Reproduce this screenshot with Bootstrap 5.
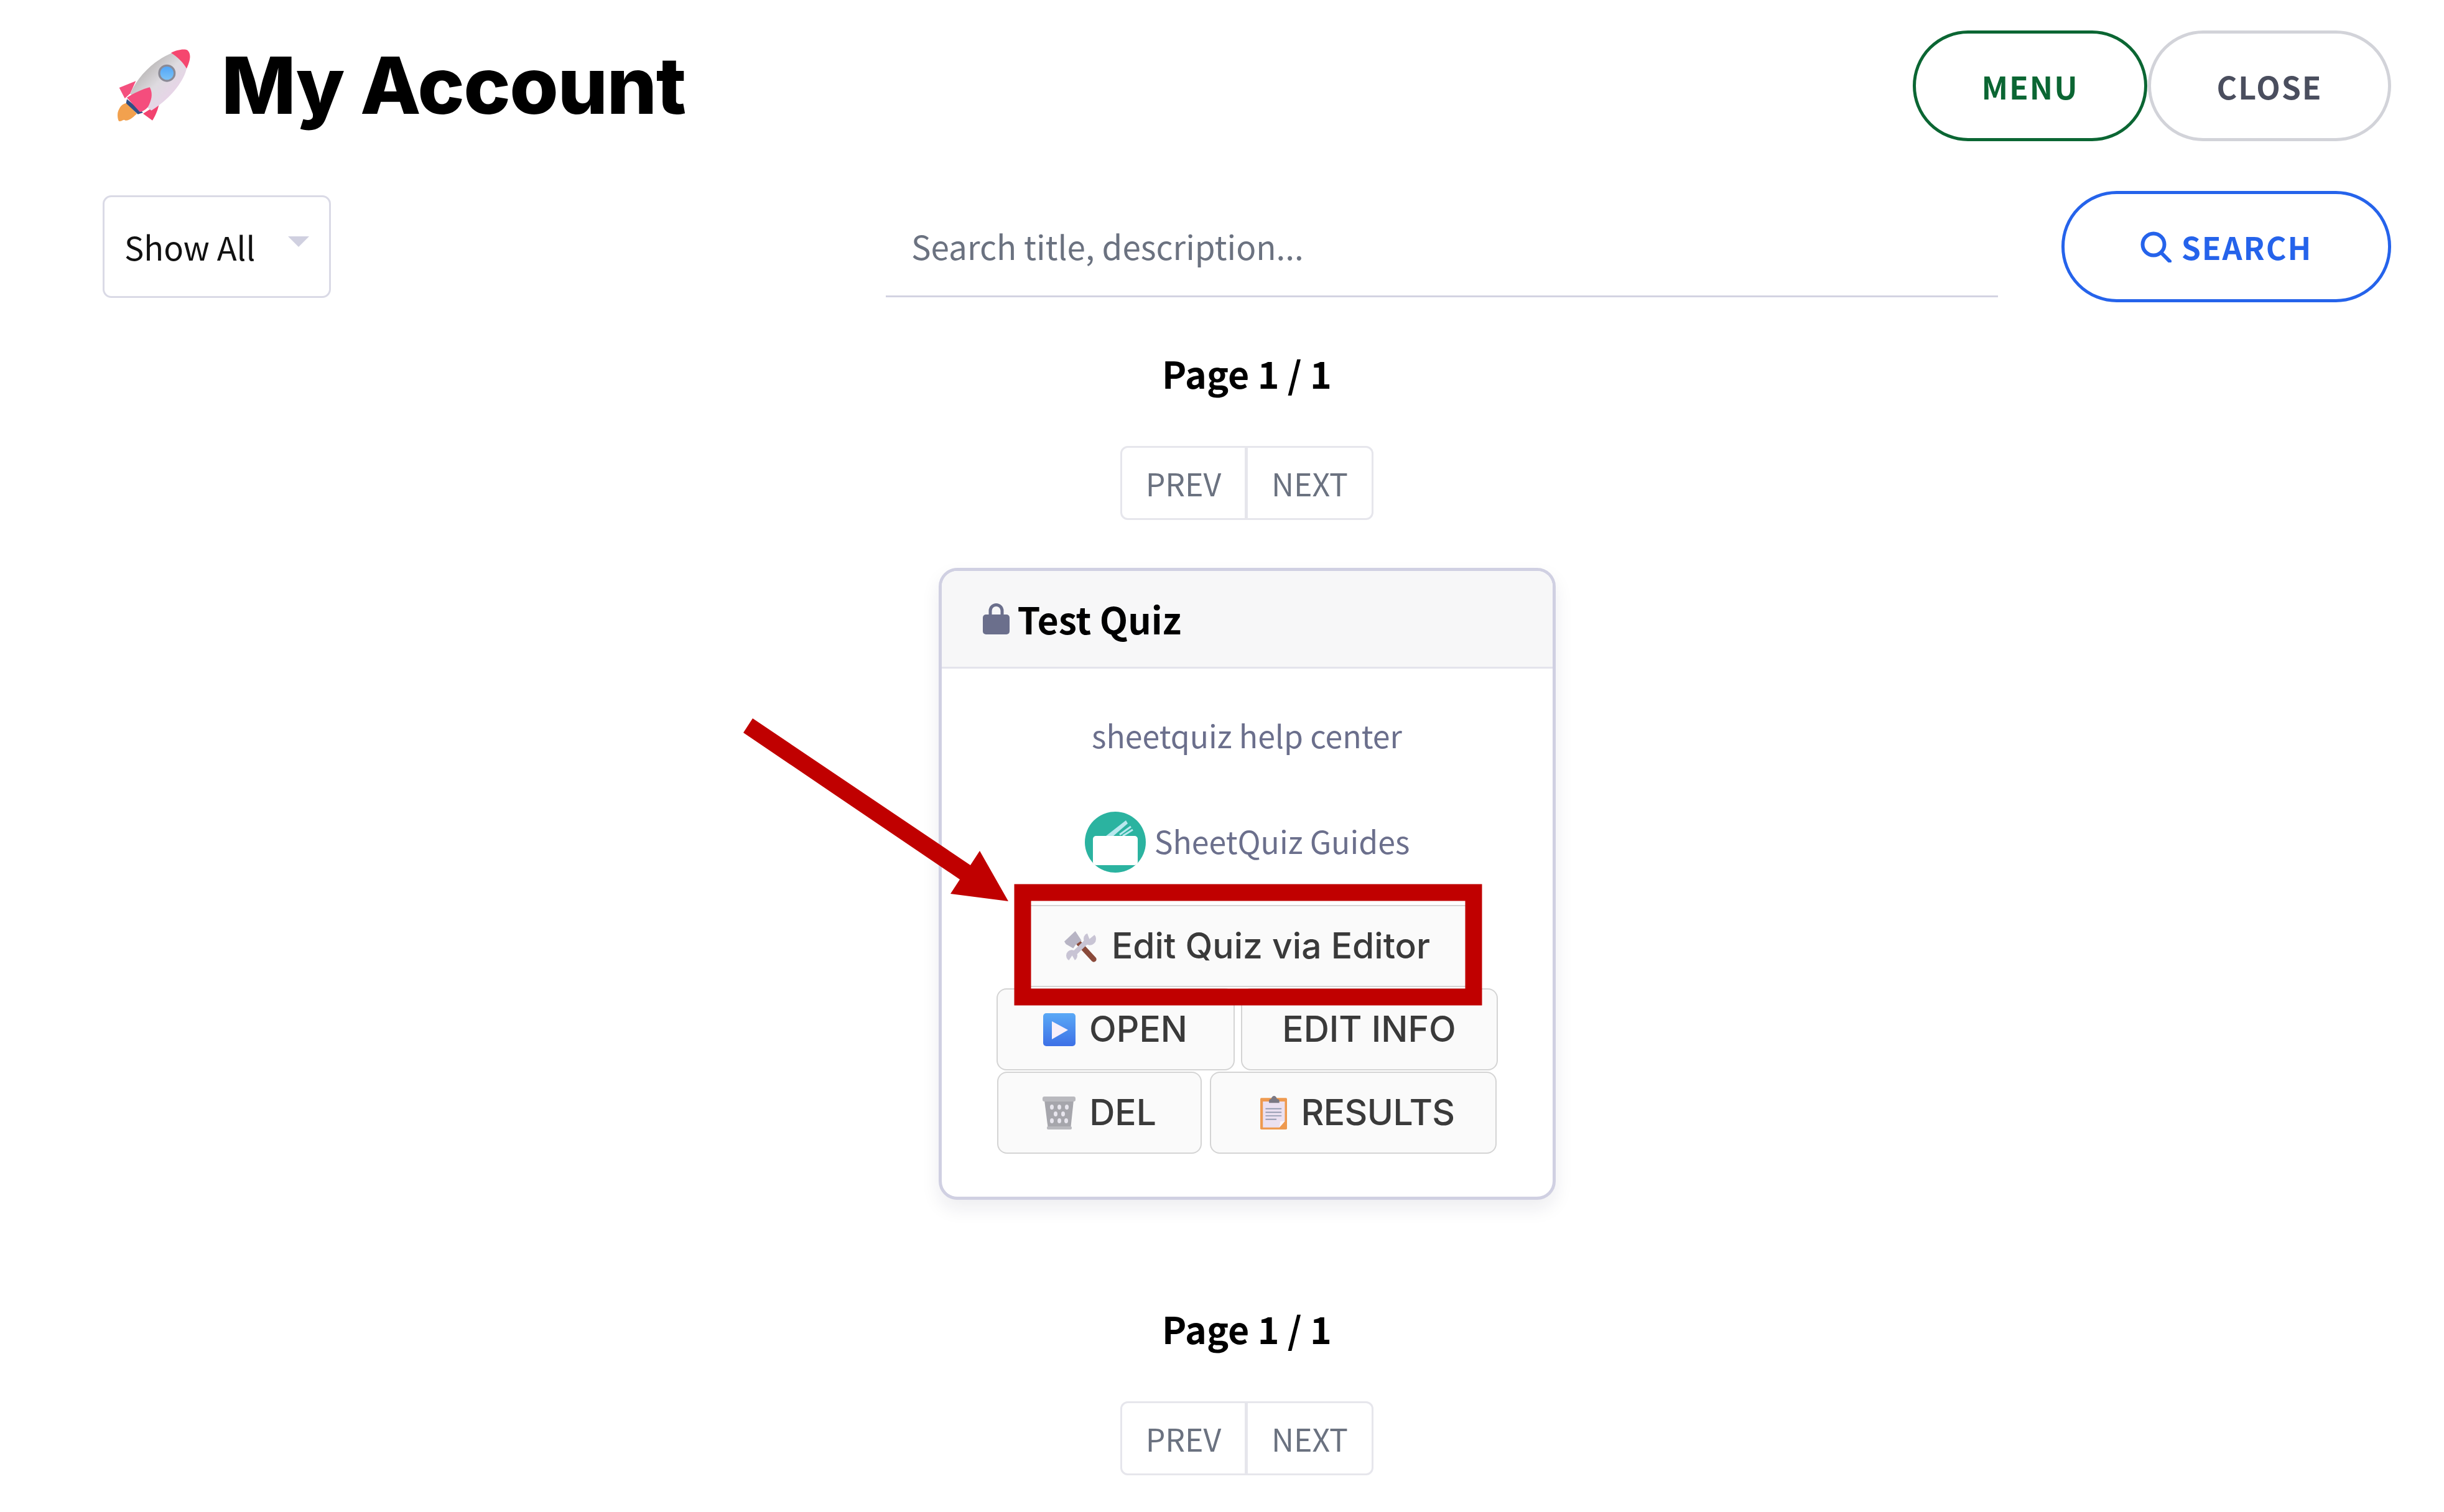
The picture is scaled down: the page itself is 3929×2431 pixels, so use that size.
<!DOCTYPE html>
<html lang="en">
<head>
    <meta charset="UTF-8">
    <meta name="viewport" content="width=device-width, initial-scale=1.0">
    <title>My Account</title>
    <link href="https://cdn.jsdelivr.net/npm/bootstrap@5.3.0/dist/css/bootstrap.min.css" rel="stylesheet">
    <style>
        html, body { height: 2431px; overflow: hidden; }
        body { position: relative; background: #fff; font-family: "Noto Sans CJK SC", "Noto Sans", sans-serif; }
        .page-wrap { padding: 49px 85px 0 165px; }
        .app-title { font-family: Inter, sans-serif; font-weight: 800; font-size: 127px; line-height: 176px; letter-spacing: -.012em; color: #000; margin: 0 0 0 23px; gap: 50px; }
        .pill-btn { height: 178px; border-radius: 89px; border-width: 5px; border-style: solid; background: #fff; font-weight: 700; font-size: 50px; letter-spacing: .04em; padding: 0; }
        .pill-menu { width: 377px; border-color: #0b6633; color: #0b6633; }
        .pill-close { width: 391px; border-color: #d2d3d9; color: #4a4e5e; margin-left: 1px; }
        .pill-search { width: 530px; height: 179px; border-color: #2563eb; color: #2563eb; margin-left: 102px; gap: 16px; }
        .tool-row { margin-top: 80px; }
        .filter-select { width: 367px; height: 165px; flex: none; font-size: 52.500px; line-height: 1.2; color: #111; border: 3px solid #dadae6; border-radius: 14px; padding: 0 0 0 32px; background-image: url("data:image/svg+xml,%3Csvg xmlns='http://www.w3.org/2000/svg' viewBox='0 0 34 17'%3E%3Cpath fill='%23d0d0e0' d='M0 0h34L17 17z'/%3E%3C/svg%3E"); background-size: 34px 17px; background-position: right 32px top 63px; }
        .search-box { width: 1788px; height: 163px; flex: none; margin-left: auto; font-size: 53px; border: 0; border-bottom: 3px solid #d3d3e2; border-radius: 0; padding: 0 0 0 41px; }
        .search-box::placeholder { color: #6b7280; opacity: 1; }
        .page-label { font-weight: 700; font-size: 59px; line-height: 84px; color: #000; margin: 0; }
        .pager-top { margin-top: 72px; }
        .pager-bottom { margin-top: 165px; }
        .pager-group { margin-top: 75px; }
        .pager-group .btn { width: 203px; height: 119px; padding: 0; font-size: 50px; color: #6b7280; background: #fff; border: 3px solid #e6e6ec; }
        .pager-group .btn:first-child { border-radius: 12px 0 0 12px; }
        .pager-group .btn:last-child { border-radius: 0 12px 12px 0; width: 205px; }
        .quiz-card { width: 992px; margin: 77px auto 0; border: 5px solid #d0d0e2; border-radius: 30px; box-shadow: 0 14px 30px rgba(30, 30, 60, .08); }
        .quiz-card .card-header { height: 157px; padding: 0 0 0 66px; background: #f7f7f8; border-bottom: 3px solid #e4e4ec; border-radius: 25px 25px 0 0; gap: 13px; font-weight: 700; font-size: 59px; color: #000; }
        .quiz-desc { font-size: 50px; line-height: 76px; color: #6b6f8c; margin: 68px 0 0; }
        .quiz-card .card-body { padding: 0 0 69px; }
        .guide-link { margin-top: 82px; gap: 13px; font-size: 50px; color: #6b6f8c; line-height: 100px; }
        .guide-icon { transform: translateY(3px); }
        .action-wrap { margin-top: 54px; gap: 2px 10px; }
        .action-btn { height: 132px; padding: 0; gap: 22px; font-family: Inter, sans-serif; font-weight: 500; font-size: 57px; color: #3a3a3a; background: #fafafa; border: 2px solid #d4d4d4; border-radius: 16px; }
        .action-edit { width: 730px; }
        .action-open { width: 383px; }
        .action-info { width: 413px; }
        .action-del { width: 329px; margin-right: 3px; }
        .action-results { width: 461px; padding-left: 14px; letter-spacing: -.01em; }
        .callout-layer { position: absolute; left: 0; top: 0; width: 3929px; height: 2431px; pointer-events: none; }
    </style>
</head>
<body>
    <div class="page-wrap">
        <div class="d-flex justify-content-between align-items-start">
            <h1 class="app-title d-flex align-items-center">
                <svg width="118" height="116" viewBox="24 24 354 348">
                    <defs>
                        <linearGradient id="hull" x1="0" y1="0" x2="1" y2="1"><stop offset=".12" stop-color="#a8a5a2"/><stop offset=".5" stop-color="#dedbe0"/><stop offset=".75" stop-color="#e9d3e9"/></linearGradient>
                        <linearGradient id="glass" x1="0" y1="0" x2="0" y2="1"><stop offset="0" stop-color="#52a6f8"/><stop offset="1" stop-color="#7cc2f6"/></linearGradient>
                    </defs>
                    <path fill="#f2a14e" d="M72 285C50 285 35 305 28 330 25 350 30 370 35 372 50 372 55 360 65 368 85 370 110 345 120 335z"/>
                    <path fill="#2f4f86" d="M72 265 150 330 125 338 68 285z"/>
                    <path fill="#f4507e" d="M115 178 35 210 62 262 88 238z"/>
                    <path fill="#f2436f" d="M228 285 150 335 195 368C210 345 222 315 228 285z"/>
                    <path fill="url(#hull)" d="M290 42C220 70 130 140 88 240L190 320C270 270 345 190 362 110 368 90 372 70 375 55 360 35 320 30 290 42z"/>
                    <path fill="#f5476f" d="M285 42C310 28 350 20 365 30 380 45 382 70 360 118 345 90 315 60 285 42z"/>
                    <circle cx="265" cy="140" r="42" fill="#8a8a96"/><circle cx="265" cy="140" r="32" fill="url(#glass)"/>
                    <path fill="#f54d7d" d="M182 208C150 215 100 240 72 258L135 328C160 320 175 305 180 290 195 260 195 230 182 208z"/>
                </svg>
                My Account
            </h1>
            <div class="d-flex">
                <button type="button" class="btn pill-btn pill-menu">MENU</button>
                <button type="button" class="btn pill-btn pill-close">CLOSE</button>
            </div>
        </div>

        <div class="tool-row d-flex align-items-center">
            <select class="form-select filter-select"><option>Show All</option></select>
            <input type="text" class="form-control search-box" placeholder="Search title, description...">
            <button type="button" class="btn pill-btn pill-search d-flex align-items-center justify-content-center flex-none">
                <svg width="50" height="50" viewBox="0 0 50 50"><circle cx="21" cy="21" r="17.500" fill="none" stroke="#2563eb" stroke-width="6"/><path d="M33 34 47 48" stroke="#2563eb" stroke-width="6" stroke-linecap="round"/></svg>
                SEARCH
            </button>
        </div>

        <div class="pager-top text-center">
            <p class="page-label">Page 1 / 1</p>
            <div class="btn-group pager-group">
                <button type="button" class="btn">PREV</button>
                <button type="button" class="btn">NEXT</button>
            </div>
        </div>

        <div class="card quiz-card">
            <div class="card-header d-flex align-items-center">
                <svg width="43" height="50" viewBox="0 0 43 50"><path d="M12 22V12a9.500 9.500 0 0 1 19 0v10" fill="none" stroke="#6b6f8c" stroke-width="5"/><rect x="0" y="18" width="43" height="32" rx="5" fill="#6b6f8c"/></svg>
                Test Quiz
            </div>
            <div class="card-body text-center">
                <p class="quiz-desc">sheetquiz help center</p>
                <div class="guide-link d-flex justify-content-center align-items-center">
                    <svg class="guide-icon" width="100" height="100" viewBox="0 0 100 100">
                        <circle cx="50" cy="50" r="49" fill="#2bb3a0"/>
                        <path fill="#b9e8ee" d="M35 40 67 15l3 5-23 20z"/>
                        <path stroke="#b9e8ee" stroke-width="3" d="M57 38 75 25M62 40 78 30"/>
                        <rect x="14" y="40" width="72" height="47" rx="5" fill="#fff"/>
                    </svg>
                    SheetQuiz Guides
                </div>
                <div class="action-wrap d-flex flex-wrap justify-content-center">
                    <button type="button" class="btn action-btn action-edit d-flex align-items-center justify-content-center">
                        <svg width="55" height="55" viewBox="39 33 165 165">
                            <path d="M112 100 184 178" stroke="#8a4a3a" stroke-width="26" stroke-linecap="round"/>
                            <circle cx="165" cy="80" r="30" fill="#c8c4d4"/>
                            <path fill="#fafafa" d="M163 80 150 46 198 52z"/>
                            <circle cx="78" cy="160" r="27" fill="#c8c4d4"/>
                            <path fill="#fafafa" d="M80 160 58 192 100 196z"/>
                            <path d="M150 92 88 152" stroke="#c8c4d4" stroke-width="24"/>
                            <path fill="#b7b4c4" d="M95 42 42 92 50 105 85 125 97 108 125 88z"/>
                        </svg>
                        Edit Quiz via Editor
                    </button>
                    <button type="button" class="btn action-btn action-open d-flex align-items-center justify-content-center">
                        <svg width="52" height="53" viewBox="0 0 52 53">
                            <defs><linearGradient id="playbg" x1="0" y1="0" x2="0" y2="1"><stop offset="0" stop-color="#5aa9f6"/><stop offset="1" stop-color="#3d70e6"/></linearGradient></defs>
                            <rect width="52" height="53" rx="5" fill="url(#playbg)"/><path fill="#f7effa" d="M14 13 40 27 14 42z"/>
                        </svg>
                        OPEN
                    </button>
                    <button type="button" class="btn action-btn action-info d-flex align-items-center justify-content-center">EDIT INFO</button>
                    <button type="button" class="btn action-btn action-del d-flex align-items-center justify-content-center">
                        <svg width="53" height="53" viewBox="0 0 53 53">
                            <path fill="#a6a6ac" d="M3 6h47l-5 47H9z"/>
                            <g fill="#e8e6ee">
                                <ellipse cx="15" cy="17" rx="3" ry="4"/><ellipse cx="27" cy="17" rx="3" ry="4"/><ellipse cx="39" cy="17" rx="3" ry="4"/>
                                <ellipse cx="21" cy="28" rx="3" ry="4"/><ellipse cx="33" cy="28" rx="3" ry="4"/>
                                <ellipse cx="15" cy="39" rx="3" ry="4"/><ellipse cx="27" cy="39" rx="3" ry="4"/><ellipse cx="38" cy="39" rx="3" ry="4"/>
                            </g>
                            <rect width="53" height="8" rx="3" fill="#b9b9be"/><rect x="7" y="48" width="40" height="5" rx="2" fill="#b9b9be"/>
                        </svg>
                        DEL
                    </button>
                    <button type="button" class="btn action-btn action-results d-flex align-items-center justify-content-center">
                        <svg width="43" height="54" viewBox="38 28 122 162" preserveAspectRatio="none">
                            <rect x="38" y="38" width="122" height="152" rx="5" fill="#ee9a50"/>
                            <path fill="#ebe0f0" d="M50 55H150V150L125 180H50z"/>
                            <path fill="#fbf6fb" d="M125 180 130 150H150z"/>
                            <path stroke="#8c94aa" stroke-width="5" d="M62 90H135M62 107H135M62 124H135M62 141H112"/>
                            <path fill="#7b7984" d="M78 62V50Q78 44 88 42 92 28 101 28 110 28 114 42 125 44 125 50V62z"/>
                        </svg>
                        RESULTS
                    </button>
                </div>
            </div>
        </div>

        <div class="pager-bottom text-center">
            <p class="page-label">Page 1 / 1</p>
            <div class="btn-group pager-group">
                <button type="button" class="btn">PREV</button>
                <button type="button" class="btn">NEXT</button>
            </div>
        </div>
    </div>

    <svg class="callout-layer" viewBox="0 0 3929 2431">
        <path fill="#c00000" d="M1210 1155 1560 1391 1575 1368 1621 1449 1528 1437 1543 1414 1195 1178z"/>
        <rect x="1644" y="1435" width="725" height="168" fill="none" stroke="#c00000" stroke-width="27"/>
    </svg>
</body>
</html>
